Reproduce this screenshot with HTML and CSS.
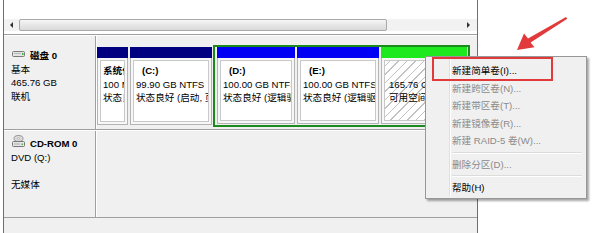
FILE: index.html
```html
<!DOCTYPE html>
<html lang="zh-CN">
<head>
<meta charset="utf-8">
<title>磁盘管理</title>
<link rel="stylesheet" href="styles.css">
</head>
<body>
<div class="window">
  <div class="listview"></div>
  <div class="hscroll">
    <div class="sbtn"><span class="tri-left"></span></div>
    <div class="track"><div class="thumb"></div></div>
    <div class="sbtn"><span class="tri-right"></span></div>
  </div>
  <div class="spacer"></div>
  <div class="graph">
    <div class="row disk">
      <div class="label">
        <div class="title">
          <svg class="hdd" width="13" height="6" viewBox="0 0 13 6"><rect x="0.5" y="0.5" width="12" height="5" rx="1" fill="#e4e4e4" stroke="#7a7a7a"/><rect x="2" y="2" width="7" height="1" fill="#b8b8b8"/><rect x="10" y="2" width="1.5" height="2" fill="#3fb83f"/></svg>
          <b>磁盘 0</b>
        </div>
        <div>基本</div>
        <div>465.76 GB</div>
        <div>联机</div>
      </div>
      <div class="parts">
        <div class="part primary w-sys">
          <div class="head navy"></div>
          <div class="body"><div class="box"><div class="ln"><b>系统保留</b></div><div class="ln">100 MB NTFS</div><div class="ln">状态良好 (系统, 活动, 主分区)</div></div></div>
        </div>
        <div class="part primary w-c">
          <div class="head navy"></div>
          <div class="body"><div class="box"><div class="ln"><b class="vol">(C:)</b></div><div class="ln">99.90 GB NTFS</div><div class="ln">状态良好 (启动, 页面文件, 故障转储, 主分区)</div></div></div>
        </div>
        <div class="ext">
          <div class="part w-d">
            <div class="head blue"></div>
            <div class="body"><div class="box"><div class="ln"><b class="vol">(D:)</b></div><div class="ln">100.00 GB NTFS</div><div class="ln">状态良好 (逻辑驱动器)</div></div></div>
          </div>
          <div class="part w-e">
            <div class="head blue"></div>
            <div class="body"><div class="box"><div class="ln"><b class="vol">(E:)</b></div><div class="ln">100.00 GB NTFS</div><div class="ln">状态良好 (逻辑驱动器)</div></div></div>
          </div>
          <div class="part w-free">
            <div class="head lime"></div>
            <div class="body"><div class="box free"><div class="ln"></div><div class="ln">165.76 GB</div><div class="ln">可用空间</div></div></div>
          </div>
        </div>
      </div>
    </div>
    <div class="row cdrom">
      <div class="label">
        <div class="title">
          <svg class="cd" width="13" height="12" viewBox="0 0 13 12"><ellipse cx="6.5" cy="3.5" rx="4.5" ry="3" fill="#dcdcdc" stroke="#7d7d7d" stroke-width="0.8"/><ellipse cx="6.5" cy="3.5" rx="1.2" ry="0.8" fill="#fff" stroke="#8a8a8a" stroke-width="0.5"/><rect x="0.5" y="6.5" width="12" height="5" rx="1" fill="#e6e6e6" stroke="#777"/><rect x="2" y="8.5" width="6" height="1" fill="#a8a8a8"/><rect x="9.5" y="8.5" width="1.5" height="1.5" fill="#4ab44a"/></svg>
          <b>CD-ROM 0</b>
        </div>
        <div>DVD (Q:)</div>
        <div class="blank"></div>
        <div>无媒体</div>
      </div>
      <div class="parts"></div>
    </div>
    <div class="rest"></div>
  </div>
</div>

<div class="menu">
  <div class="item on">新建简单卷(I)...</div>
  <div class="item">新建跨区卷(N)...</div>
  <div class="item">新建带区卷(T)...</div>
  <div class="item">新建镜像卷(R)...</div>
  <div class="item">新建 RAID-5 卷(W)...</div>
  <div class="sep"></div>
  <div class="item">删除分区(D)...</div>
  <div class="sep"></div>
  <div class="item on">帮助(H)</div>
</div>
<div class="highlight"></div>
<svg class="arrow" width="600" height="233" viewBox="0 0 600 233">
  <polygon points="517,50 524,33.5 528,38.6 566,17 567.3,18.8 530.6,42.6 534.5,47.2" fill="#e23a3a"/>
</svg>
</body>
</html>
```

FILE: styles.css
```css
* { box-sizing: border-box; }
html, body { margin: 0; padding: 0; }
body {
  width: 600px;
  height: 233px;
  overflow: hidden;
  position: relative;
  background: #fff;
  font-family: "Liberation Sans", "Noto Sans CJK SC", sans-serif;
  font-size: 9.6px;
  color: #000;
}

.window {
  margin-left: 3px;
  width: 475px;
  height: 233px;
  border-left: 1px solid #6f6f6f;
  border-right: 1px solid #6f6f6f;
  display: flex;
  flex-direction: column;
}
.listview { height: 19px; background: #fff; flex: none; }

.hscroll {
  height: 12px;
  flex: none;
  display: flex;
  background: #f2f2f2;
}
.sbtn {
  width: 15px;
  display: flex;
  align-items: center;
  justify-content: center;
}
.sbtn:last-child { width: 17px; }
.tri-left {
  width: 0; height: 0;
  border-top: 3px solid transparent;
  border-bottom: 3px solid transparent;
  border-right: 3px solid #303030;
}
.tri-right {
  width: 0; height: 0;
  border-top: 3px solid transparent;
  border-bottom: 3px solid transparent;
  border-left: 3px solid #303030;
}
.track { flex: 1; }
.thumb {
  width: 368px;
  height: 12px;
  border: 1px solid #a9a9a9;
  border-radius: 2px;
  background: linear-gradient(#f6f6f6, #e6e6e6 50%, #dadada);
}
.spacer { height: 3px; flex: none; background: #fff; }

.graph {
  flex: 1;
  background: #f0f0f0;
  border-top: 1px solid #9d9d9d;
  display: flex;
  flex-direction: column;
}
.row {
  display: flex;
  border-top: 1px solid #fff;
  border-bottom: 1px solid #a0a0a0;
  flex: none;
}
.row.disk { height: 95px; }
.row.cdrom { height: 88px; }
.rest { flex: 1; }

.label {
  width: 92px;
  flex: none;
  border-right: 1px solid #a0a0a0;
  padding-left: 7px;
  line-height: 13.5px;
  white-space: nowrap;
}
.disk .label { padding-top: 13px; }
.cdrom .label { padding-top: 6px; }
.title { display: flex; align-items: center; }
.title b { font-weight: bold; }
.hdd { margin-left: 1px; margin-right: 5px; margin-top: -3px; }
.cd { margin-left: 1px; margin-right: 5px; margin-top: -6px; }
.blank { height: 13.5px; }

.parts {
  flex: 1;
  border-left: 1px solid #fff;
  padding: 9px 0 0 0;
  display: flex;
  align-items: flex-start;
  gap: 2px;
}
.part { display: flex; flex-direction: column; flex: none; }
.part.primary { margin-top: 2px; height: 78px; }
.w-sys { width: 31px; }
.w-c { width: 82px; }
.w-d { width: 78px; }
.w-e { width: 82px; }
.w-free { width: 86px; }

.ext {
  margin-left: -1px;
  height: 82px;
  border: 2px solid #1c8a1c;
  padding: 0 1px 1px 2px;
  display: flex;
  gap: 2px;
}
.ext .part { height: 100%; }

.head { height: 11px; flex: none; }
.navy { background: #000080; }
.blue { background: #0000f4; }
.lime { background: #1ee81e; }

.body {
  flex: 1;
  border: 1px solid #b4b4b4;
  border-top: 0;
  background: #f7f7f7;
  padding: 2px;
  min-height: 0;
}
.box {
  height: 100%;
  background: #fff;
  border: 1px solid #c8c8c8;
  padding: 3px 0 0 2px;
  overflow: hidden;
}
.ln {
  height: 13.5px;
  line-height: 13.5px;
  white-space: nowrap;
  overflow: hidden;
}
.box .vol { padding-left: 6px; }
.box.free {
  padding-left: 4px;
  background: repeating-linear-gradient(135deg, #fff 0 3px, #c2c2c2 3px 4px, #fff 4px 6px);
}

.menu {
  position: absolute;
  left: 425px;
  top: 56px;
  width: 162px;
  height: 143px;
  background: #f0f0f0;
  border: 1px solid #979797;
  box-shadow: 2px 2px 2px rgba(0, 0, 0, 0.35);
  padding: 5px 2px 2px 2px;
}
.menu::before {
  content: "";
  position: absolute;
  left: 23px;
  top: 2px;
  bottom: 2px;
  width: 1px;
  background: #e0e0e0;
  box-shadow: 1px 0 0 #fff;
}
.item {
  height: 17.6px;
  line-height: 17.6px;
  padding-left: 24px;
  color: #8a8a8a;
  white-space: nowrap;
}
.item.on { color: #000; }
.sep {
  height: 5.6px;
  position: relative;
}
.sep::after {
  content: "";
  position: absolute;
  left: 24px;
  right: 2px;
  top: 2px;
  height: 1px;
  background: #dcdcdc;
  box-shadow: 0 1px 0 #fff;
}

.highlight {
  position: absolute;
  left: 432px;
  top: 57px;
  width: 121px;
  height: 24px;
  border: 2px solid #e03a3a;
}
.arrow {
  position: absolute;
  left: 0;
  top: 0;
  pointer-events: none;
}
```
